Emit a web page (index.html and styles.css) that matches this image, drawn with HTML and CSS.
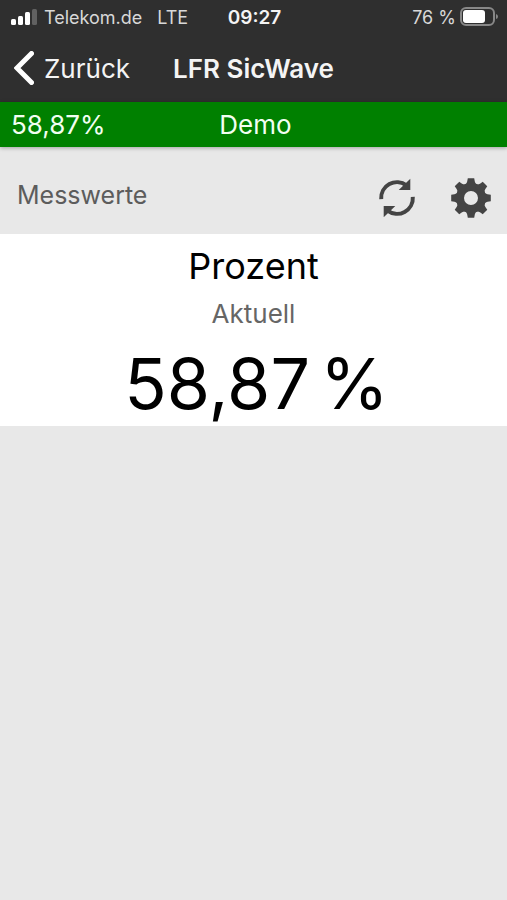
FILE: index.html
```html
<!DOCTYPE html>
<html lang="de">
<head>
<meta charset="utf-8">
<meta name="viewport" content="width=device-width, initial-scale=1">
<title>LFR SicWave</title>
<link rel="stylesheet" href="styles.css">
</head>
<body>
<header class="top">
  <div class="status">
    <div class="carrier">
      <svg class="signal" width="26" height="18" viewBox="0 0 26 18" aria-hidden="true">
        <rect x="0" y="11" width="5" height="6" rx="1.5"/>
        <rect x="7" y="8" width="5" height="9" rx="1.5"/>
        <rect x="14" y="4" width="5" height="13" rx="1.5"/>
        <rect class="off" x="21" y="1" width="5" height="16" rx="1.5"/>
      </svg>
      <span>Telekom.de</span>
      <span class="network">LTE</span>
    </div>
    <time class="clock">09:27</time>
    <div class="power">
      <span>76 %</span>
      <svg width="38" height="20" viewBox="0 0 38 20" aria-hidden="true">
        <rect class="shell" x="1" y="1" width="33" height="17" rx="5"/>
        <rect class="charge" x="3" y="3" width="22" height="13" rx="3"/>
        <path class="tip" d="M36 7q2 .5 2 2.500t-2 2.500z"/>
      </svg>
    </div>
  </div>
  <nav class="nav">
    <a class="back" href="#">
      <svg width="20" height="34" viewBox="0 0 20 34" aria-hidden="true"><path d="M17.500 2.500L3 17l14.500 14.500"/></svg>
      <span>Zurück</span>
    </a>
    <h1 class="title">LFR SicWave</h1>
  </nav>
</header>
<div class="banner">
  <span>58,87%</span>
  <span class="device">Demo</span>
</div>
<main>
  <div class="toolbar">
    <h2 class="heading">Messwerte</h2>
    <button class="tool" type="button" aria-label="Aktualisieren">
      <svg width="40" height="40" viewBox="-20 -20 40 40" aria-hidden="true">
        <path class="arc" d="M-15.800 1.200A15.800 15.800 0 0 1 9.500-12.600M15.800-1.200A15.800 15.800 0 0 1-9.500 12.600"/>
        <path d="M13.300-19.300V-8H1.700zM-13.300 19.300V8H-1.700z"/>
      </svg>
    </button>
    <button class="tool" type="button" aria-label="Einstellungen">
      <svg width="40" height="40" viewBox="-20 -20 40 40" aria-hidden="true">
        <circle class="ring" r="11"/>
        <g id="teeth">
          <path id="tooth" d="M-5.800-13.500Q-4.200-14.500-3.800-16.500L-3.200-19.800H3.200L3.800-16.500Q4.200-14.500 5.800-13.500L4-10H-4z"/>
          <use href="#tooth" transform="rotate(45)"/>
          <use href="#tooth" transform="rotate(90)"/>
          <use href="#tooth" transform="rotate(135)"/>
        </g>
        <use href="#teeth" transform="rotate(180)"/>
      </svg>
    </button>
  </div>
  <section class="reading">
    <h3 class="name">Prozent</h3>
    <p class="state">Aktuell</p>
    <p class="value"><span>58,87</span> <span>%</span></p>
  </section>
</main>
</body>
</html>
```
FILE: styles.css
```css
* {
  box-sizing: border-box;
}

body {
  margin: 0;
  min-height: 100vh;
  background: #e8e8e8;
  color: #000;
  font-family: Inter, "Liberation Sans", sans-serif;
  font-size: 26px;
}

h1, h2, h3, p {
  margin: 0;
  font-weight: 400;
}

.top {
  background: #2f2f2f;
  color: #f4f4f4;
}

.status {
  display: grid;
  grid-template-columns: 1fr auto 1fr;
  align-items: center;
  height: 34px;
  padding: 0 9px 0 11px;
  font-size: 18px;
}

.carrier,
.power {
  display: flex;
  align-items: center;
  color: #d8d8d8;
}

.carrier {
  gap: 7px;
}

.network {
  margin-left: 8px;
}

.signal {
  fill: #fff;
}

.signal .off {
  fill: #616161;
}

.clock {
  font-size: 19px;
  font-weight: 600;
}

.power {
  justify-content: flex-end;
  gap: 4px;
}

.shell {
  fill: none;
  stroke: #888;
  stroke-width: 2;
}

.charge {
  fill: #fff;
}

.tip {
  fill: #888;
}

.nav {
  display: grid;
  grid-template-columns: 1fr auto 1fr;
  align-items: center;
  height: 68px;
  padding: 0 14px;
}

.back {
  display: flex;
  align-items: center;
  gap: 10px;
  color: inherit;
  text-decoration: none;
}

.back svg {
  fill: none;
  stroke: #fff;
  stroke-width: 5;
  stroke-linecap: round;
}

.title {
  font-size: 26px;
  font-weight: 600;
}

.banner {
  display: grid;
  grid-template-columns: 1fr auto 1fr;
  align-items: center;
  position: relative;
  height: 45px;
  padding: 0 7px 0 11px;
  background: #008000;
  color: #f2fff2;
  box-shadow: 0 1px 4px rgba(0, 0, 0, 0.3);
}

.toolbar {
  display: flex;
  align-items: center;
  gap: 34px;
  height: 87px;
  padding: 15px 16px 0 17px;
}

.heading {
  flex: 1;
  padding-bottom: 6px;
  color: #5c5c5c;
  font-size: 25px;
}

.tool {
  display: flex;
  padding: 0;
  border: 0;
  background: none;
  fill: #444;
}

.arc {
  fill: none;
  stroke: #444;
  stroke-width: 4;
}

.ring {
  fill: none;
  stroke: #444;
  stroke-width: 8;
}

.reading {
  padding: 8px 16px 0;
  background: #fff;
  text-align: center;
}

.name {
  font-size: 36px;
  line-height: 48px;
}

.state {
  color: #666;
  font-size: 26px;
  line-height: 48px;
}

.value {
  display: flex;
  justify-content: center;
  gap: 10px;
  padding: 4px 0 0 6px;
  font-size: 70px;
  line-height: 84px;
}
```
